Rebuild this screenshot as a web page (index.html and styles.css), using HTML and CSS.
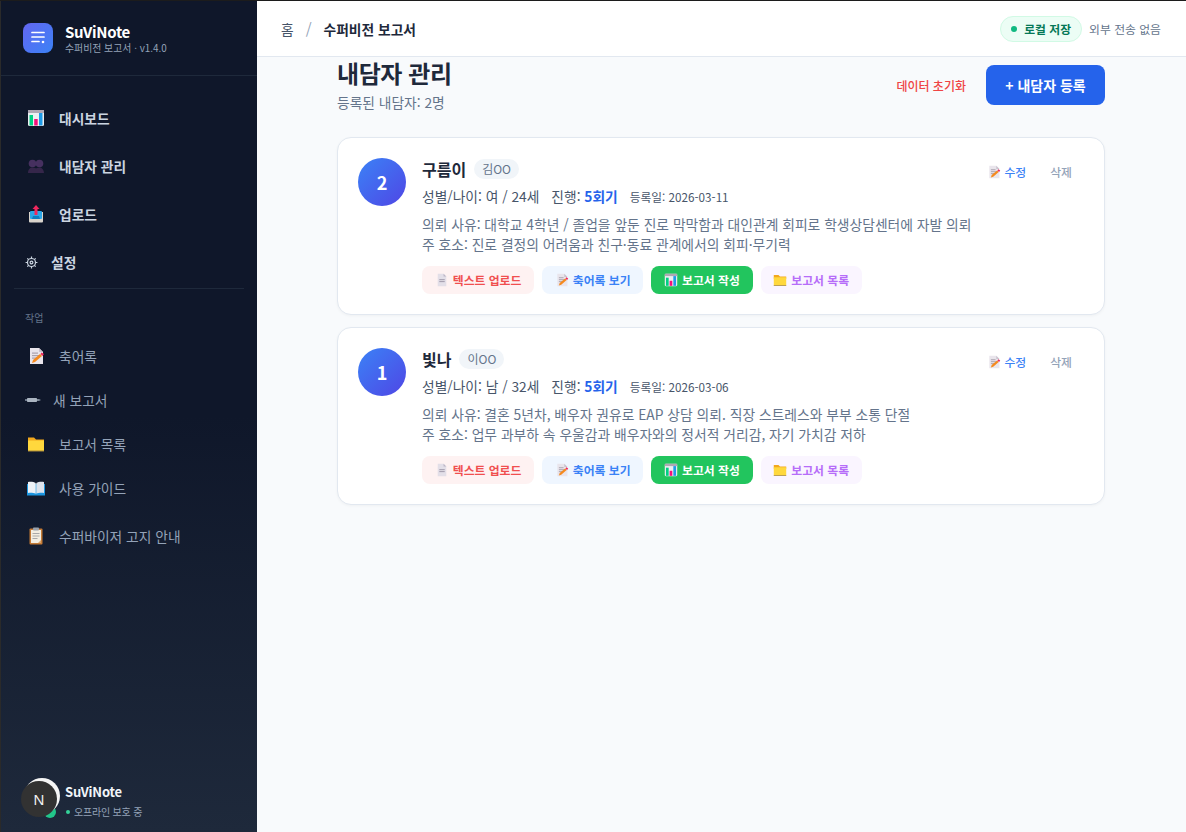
FILE: index.html
```html
<!DOCTYPE html>
<html lang="ko">
<head>
  <meta charset="UTF-8" />
  <meta name="viewport" content="width=device-width, initial-scale=1.0"/>
  <title>SuViNote - 내담자 관리</title>
  <link rel="stylesheet" href="styles.css">
</head>
<body>
  <svg class="icon-defs" width="0" height="0" aria-hidden="true">
    <symbol id="i-chart" viewBox="0 0 18 18">
      <rect x="1" y="1" width="16" height="16" rx="1.500" fill="#eceff1"/>
      <rect x="1" y="1" width="16" height="3" fill="#b0a8b4"/>
      <rect x="2.500" y="6" width="3.500" height="10.500" fill="#00d084"/>
      <rect x="7.200" y="10" width="3.500" height="6.500" fill="#f5107a"/>
      <rect x="12" y="4" width="3.500" height="12.500" fill="#1e9be8"/>
    </symbol>
    <symbol id="i-people" viewBox="0 0 18 18">
      <circle cx="5.500" cy="6.500" r="3.800" fill="#46305f"/>
      <circle cx="12.500" cy="6.500" r="3.800" fill="#46305f"/>
      <path d="M1 16c0-3.500 2-5.500 4.500-5.500s3.500 1 3.500 1 1.500-1 3.500-1 4.500 2 4.500 5.500z" fill="#35264a"/>
    </symbol>
    <symbol id="i-upload" viewBox="0 0 18 18">
      <path d="M2 7h14v9.500a1 1 0 0 1-1 1H3a1 1 0 0 1-1-1z" fill="#d9d4cc"/>
      <rect x="3" y="6" width="12" height="8" rx="1" fill="#2ba6e8"/>
      <path d="M6 11h6l1 3H5z" fill="#0d7cc0"/>
      <path d="M9 0l3.500 4H10.500v6h-3V4H5.500z" fill="#f0285e"/>
    </symbol>
    <symbol id="i-memo" viewBox="0 0 18 18">
      <path d="M3 1h9l4 4v12H3z" fill="#e9e5ec"/>
      <path d="M12 1l4 4h-4z" fill="#c9c2cd"/>
      <rect x="5" y="5.500" width="6" height="1.200" fill="#a9a2ad"/>
      <rect x="5" y="8" width="8" height="1.200" fill="#a9a2ad"/>
      <rect x="5" y="10.500" width="5" height="1.200" fill="#a9a2ad"/>
      <path d="M5 16l1-3 7-6 2 2-7 6z" fill="#f58a1f"/>
      <path d="M14.500 5.500l2.500 1.500-1.500 2-2-2z" fill="#f0285e"/>
    </symbol>
    <symbol id="i-pen" viewBox="0 0 16 6">
      <rect x="0" y="2" width="2" height="2" rx="1" fill="#8d99a8"/>
      <rect x="2" y="1" width="10" height="4" rx="0.800" fill="#aab4c0"/>
      <path d="M12 2h2l2 1-2 1h-2z" fill="#7d8997"/>
    </symbol>
    <symbol id="i-folder" viewBox="0 0 18 18">
      <path d="M1 2.500h6l2 2h8v3H1z" fill="#f2a81d"/>
      <path d="M1 5.500h16V16H1z" fill="#ffd83d"/>
      <rect x="1" y="15.500" width="16" height="1" fill="#a98a3c"/>
    </symbol>
    <symbol id="i-book" viewBox="0 0 18 18">
      <path d="M0 5h18v11.500H0z" fill="#1c96e0"/>
      <path d="M1 3c3-.500 6 0 7.700 1v10.800C7 14 4 13.600 1 14z" fill="#eef2f7"/>
      <path d="M17 3c-3-.500-6 0-7.700 1v10.800c1.700-.800 4.700-1.200 7.700-.800z" fill="#dde3ec"/>
    </symbol>
    <symbol id="i-clip" viewBox="0 0 18 18">
      <rect x="2.500" y="1.500" width="13" height="16" rx="1" fill="#c47a35"/>
      <rect x="4" y="3" width="10" height="13" fill="#f3eee2"/>
      <rect x="6" y="0.500" width="6" height="3" rx="0.800" fill="#9aa2ac"/>
      <rect x="5.500" y="6" width="7" height="1" fill="#a9a9a9"/>
      <rect x="5.500" y="8.500" width="7" height="1" fill="#a9a9a9"/>
      <rect x="5.500" y="11" width="5" height="1" fill="#a9a9a9"/>
      <path d="M14 13v3h-3z" fill="#d9a56b"/>
    </symbol>
    <symbol id="i-page" viewBox="0 0 18 18">
      <path d="M3.500 1h7.500l3.500 3.500V17h-11z" fill="#e3dfe8"/>
      <path d="M11 1l3.500 3.500H11z" fill="#bdb6c6"/>
      <rect x="5.500" y="8" width="7" height="1.200" fill="#9d96a8"/>
      <rect x="5.500" y="10.500" width="7" height="1.200" fill="#9d96a8"/>
    </symbol>
  </svg>

  <div class="app">
    <aside class="sidebar">
      <div class="brand">
        <div class="brand-logo">
          <svg width="18" height="18" viewBox="0 0 18 18" fill="none" stroke="#fff" stroke-width="1.700" stroke-linecap="round">
            <path d="M3 3.500h12M3 8h12M3 12.500h7"/>
            <circle cx="14" cy="13" r="1.300" fill="#fff" stroke="none"/>
          </svg>
        </div>
        <div class="brand-text">
          <div class="brand-name">SuViNote</div>
          <div class="brand-sub">수퍼비전 보고서 · v1.4.0</div>
        </div>
      </div>

      <nav class="nav">
        <a class="nav-item primary" href="#"><svg class="emoji"><use href="#i-chart"/></svg>대시보드</a>
        <a class="nav-item primary" href="#"><svg class="emoji"><use href="#i-people"/></svg>내담자 관리</a>
        <a class="nav-item primary" href="#"><svg class="emoji"><use href="#i-upload"/></svg>업로드</a>
        <a class="nav-item primary small-icon" href="#">
          <svg class="gear" viewBox="0 0 14 14" fill="none" stroke="#cbd5e1" stroke-width="1.300">
            <circle cx="7" cy="7" r="4.300"/>
            <circle cx="7" cy="7" r="1.500"/>
            <path d="M7 .6v2M7 11.400v2M.6 7h2M11.400 7h2M2.500 2.500L3.900 3.900M10.100 10.100l1.400 1.400M2.500 11.500L3.900 10.100M10.100 3.900l1.400-1.400"/>
          </svg>설정</a>
        <div class="nav-line"></div>
        <div class="nav-label">작업</div>
        <a class="nav-item" href="#"><svg class="emoji"><use href="#i-memo"/></svg>축어록</a>
        <a class="nav-item small-icon" href="#"><svg class="pen"><use href="#i-pen"/></svg>새 보고서</a>
        <a class="nav-item" href="#"><svg class="emoji"><use href="#i-folder"/></svg>보고서 목록</a>
        <a class="nav-item" href="#"><svg class="emoji"><use href="#i-book"/></svg>사용 가이드</a>
        <a class="nav-item notice" href="#"><svg class="emoji"><use href="#i-clip"/></svg>수퍼바이저 고지 안내</a>
      </nav>

      <div class="side-foot">
        <div class="foot-name">SuViNote</div>
        <div class="foot-status"><span class="foot-dot"></span>오프라인 보호 중</div>
      </div>
      <div class="next-dot"></div>
      <div class="next-badge">N</div>
    </aside>

    <div class="main">
      <header class="topbar">
        <div class="crumbs">
          <span class="crumb-home">홈</span>
          <span class="crumb-sep">/</span>
          <span class="crumb-now">수퍼비전 보고서</span>
        </div>
        <div class="top-right">
          <span class="local-badge"><span class="local-dot"></span>로컬 저장</span>
          <span class="top-note">외부 전송 없음</span>
        </div>
      </header>

      <main class="content">
        <div class="page-head">
          <div>
            <h1>내담자 관리</h1>
            <p class="page-sub">등록된 내담자: 2명</p>
          </div>
          <div class="page-actions">
            <button class="btn-reset" type="button">데이터 초기화</button>
            <button class="btn-add" type="button">+ 내담자 등록</button>
          </div>
        </div>

        <div class="card">
          <div class="avatar">2</div>
          <div class="card-body">
            <div class="card-name"><strong>구름이</strong><span class="chip">김OO</span></div>
            <div class="card-meta">
              <span>성별/나이: 여 / 24세</span>
              <span>진행: <b>5회기</b></span>
              <span class="reg-date">등록일: 2026-03-11</span>
            </div>
            <div class="card-desc">
              <div>의뢰 사유: 대학교 4학년 / 졸업을 앞둔 진로 막막함과 대인관계 회피로 학생상담센터에 자발 의뢰</div>
              <div>주 호소: 진로 결정의 어려움과 친구·동료 관계에서의 회피·무기력</div>
            </div>
            <div class="card-btns">
              <a class="act act-red" href="#"><svg class="act-icon"><use href="#i-page"/></svg>텍스트 업로드</a>
              <a class="act act-blue" href="#"><svg class="act-icon"><use href="#i-memo"/></svg>축어록 보기</a>
              <a class="act act-green" href="#"><svg class="act-icon"><use href="#i-chart"/></svg>보고서 작성</a>
              <a class="act act-purple" href="#"><svg class="act-icon"><use href="#i-folder"/></svg>보고서 목록</a>
            </div>
          </div>
          <div class="card-tools">
            <a class="tool-edit" href="#"><svg class="act-icon"><use href="#i-memo"/></svg>수정</a>
            <a class="tool-del" href="#">삭제</a>
          </div>
        </div>

        <div class="card">
          <div class="avatar">1</div>
          <div class="card-body">
            <div class="card-name"><strong>빛나</strong><span class="chip">이OO</span></div>
            <div class="card-meta">
              <span>성별/나이: 남 / 32세</span>
              <span>진행: <b>5회기</b></span>
              <span class="reg-date">등록일: 2026-03-06</span>
            </div>
            <div class="card-desc">
              <div>의뢰 사유: 결혼 5년차, 배우자 권유로 EAP 상담 의뢰. 직장 스트레스와 부부 소통 단절</div>
              <div>주 호소: 업무 과부하 속 우울감과 배우자와의 정서적 거리감, 자기 가치감 저하</div>
            </div>
            <div class="card-btns">
              <a class="act act-red" href="#"><svg class="act-icon"><use href="#i-page"/></svg>텍스트 업로드</a>
              <a class="act act-blue" href="#"><svg class="act-icon"><use href="#i-memo"/></svg>축어록 보기</a>
              <a class="act act-green" href="#"><svg class="act-icon"><use href="#i-chart"/></svg>보고서 작성</a>
              <a class="act act-purple" href="#"><svg class="act-icon"><use href="#i-folder"/></svg>보고서 목록</a>
            </div>
          </div>
          <div class="card-tools">
            <a class="tool-edit" href="#"><svg class="act-icon"><use href="#i-memo"/></svg>수정</a>
            <a class="tool-del" href="#">삭제</a>
          </div>
        </div>
      </main>
    </div>
  </div>
</body>
</html>
```

FILE: styles.css
```css
* {
  box-sizing: border-box;
}
html, body {
  height: 100%;
}
body {
  margin: 0;
  font-family: "Noto Sans CJK KR", "Noto Sans", sans-serif;
  background-color: #f8fafc;
  color: #0f172a;
  overflow: hidden;
}
a {
  text-decoration: none;
}
.icon-defs {
  position: absolute;
}
.app {
  display: flex;
  height: 832px;
  border-top: 1px solid #1c1c1c;
}

/* sidebar */
.sidebar {
  position: relative;
  width: 257px;
  flex-shrink: 0;
  display: flex;
  flex-direction: column;
  background: linear-gradient(180deg, #0f172a 0%, #0f172a 50%, #1e293b 100%);
  border-left: 1px solid #2a2a2a;
}
.brand {
  display: flex;
  align-items: center;
  gap: 12px;
  height: 75px;
  padding: 0 22px;
  border-bottom: 1px solid #1e293b;
}
.brand-logo {
  width: 30px;
  height: 30px;
  border-radius: 8px;
  background: linear-gradient(135deg, #6366f1, #3b82f6);
  display: flex;
  align-items: center;
  justify-content: center;
}
.brand-text {
  padding-top: 2px;
}
.brand-name {
  font-size: 15px;
  font-weight: 700;
  line-height: 18px;
  letter-spacing: -0.3px;
  color: #fff;
}
.brand-sub {
  font-size: 9.900px;
  line-height: 14px;
  color: #94a3b8;
}
.nav {
  display: flex;
  flex-direction: column;
  padding: 18px 13px 0;
}
.nav-item {
  display: flex;
  align-items: center;
  gap: 14px;
  height: 44px;
  padding-left: 13px;
  font-size: 13.760px;
  color: #94a3b8;
}
.nav-item.primary {
  height: 48px;
  font-weight: 700;
  color: #cbd5e1;
}
.nav-item.small-icon {
  padding-left: 11px;
}
.nav-item.notice {
  height: 52px;
}
.emoji {
  width: 18px;
  height: 18px;
  flex-shrink: 0;
}
.gear {
  width: 13px;
  height: 13px;
  margin-right: -1px;
  flex-shrink: 0;
}
.pen {
  width: 16px;
  height: 6px;
  margin-right: -2px;
  flex-shrink: 0;
}
.nav-line {
  height: 1px;
  margin-top: 2px;
  background-color: #1e293b;
}
.nav-label {
  height: 45px;
  padding: 22px 0 0 11px;
  font-size: 10px;
  line-height: 14px;
  color: #64748b;
}
.side-foot {
  margin-top: auto;
  padding: 0 0 13px 64px;
}
.foot-name {
  font-size: 13px;
  font-weight: 700;
  line-height: 18px;
  letter-spacing: -0.2px;
  color: #f1f5f9;
}
.foot-status {
  display: flex;
  align-items: center;
  gap: 4px;
  margin-top: 4px;
  font-size: 10px;
  line-height: 14px;
  letter-spacing: -0.2px;
  color: #94a3b8;
}
.foot-dot {
  width: 4px;
  height: 4px;
  margin-left: 1px;
  border-radius: 50%;
  background-color: #34d399;
}
.next-dot {
  position: absolute;
  left: 43px;
  top: 805px;
  width: 12px;
  height: 12px;
  border-radius: 50%;
  background-color: #22c58a;
}
.next-badge {
  position: absolute;
  left: 20px;
  top: 780px;
  width: 36px;
  height: 36px;
  border-radius: 50%;
  display: flex;
  align-items: center;
  justify-content: center;
  background-color: #323232;
  box-shadow: 3px -3px 0 0 #f5f5f5;
  color: #f0f0f0;
  font-family: "Liberation Sans", sans-serif;
  font-size: 15px;
}

/* top bar */
.main {
  flex: 1;
  display: flex;
  flex-direction: column;
  min-width: 0;
}
.topbar {
  display: flex;
  align-items: center;
  justify-content: space-between;
  height: 56px;
  flex-shrink: 0;
  padding: 0 25px 0 24px;
  background-color: #fff;
  border-bottom: 1px solid #e2e8f0;
}
.crumbs {
  display: flex;
  align-items: center;
  font-size: 13.760px;
}
.crumb-home {
  color: #475569;
}
.crumb-sep {
  margin: 0 12px;
  color: #94a3b8;
  font-size: 15px;
}
.crumb-now {
  font-weight: 600;
  color: #1e293b;
}
.top-right {
  display: flex;
  align-items: center;
  gap: 7px;
}
.local-badge {
  display: flex;
  align-items: center;
  gap: 7px;
  height: 26px;
  padding: 0 10px;
  border: 1px solid #d1fae5;
  border-radius: 13px;
  background-color: #ecfdf5;
  font-size: 11.840px;
  font-weight: 700;
  color: #047857;
}
.local-dot {
  width: 6px;
  height: 6px;
  border-radius: 50%;
  background-color: #10b981;
}
.top-note {
  font-size: 11.840px;
  color: #64748b;
}

/* content */
.content {
  width: 768px;
  margin-left: 80px;
  padding-top: 1px;
}
.page-head {
  display: flex;
  align-items: center;
  justify-content: space-between;
  margin-bottom: 25px;
}
.page-head h1 {
  margin: 0;
  font-size: 24px;
  line-height: 30px;
  font-weight: 700;
  letter-spacing: -0.4px;
  color: #1e293b;
}
.page-sub {
  margin: 4px 0 0;
  font-size: 13.760px;
  line-height: 20px;
  color: #64748b;
}
.page-actions {
  display: flex;
  align-items: center;
  gap: 20px;
}
.btn-reset {
  padding: 0;
  border: none;
  background: none;
  font-family: inherit;
  font-size: 12px;
  font-weight: 500;
  color: #ef4444;
}
.btn-add {
  width: 119px;
  height: 40px;
  border: none;
  border-radius: 8px;
  background-color: #2563eb;
  font-family: inherit;
  font-size: 14px;
  font-weight: 700;
  color: #fff;
}

/* cards */
.card {
  display: flex;
  gap: 16px;
  height: 178px;
  margin-bottom: 12px;
  padding: 20px;
  background-color: #fff;
  border: 1px solid #e2e8f0;
  border-radius: 14px;
  box-shadow: 0 1px 3px rgba(0,0,0,0.04);
}
.avatar {
  width: 48px;
  height: 48px;
  flex-shrink: 0;
  border-radius: 50%;
  display: flex;
  align-items: center;
  justify-content: center;
  background: linear-gradient(135deg, #3b82f6, #4f46e5);
  color: #fff;
  font-size: 18px;
  font-weight: 700;
}
.card-body {
  flex: 1;
  min-width: 0;
}
.card-name {
  display: flex;
  align-items: center;
  gap: 8px;
  height: 22px;
}
.card-name strong {
  font-size: 16px;
  font-weight: 700;
  color: #1e293b;
}
.chip {
  height: 20px;
  padding: 0 8px;
  border-radius: 10px;
  background-color: #f1f5f9;
  font-size: 12px;
  line-height: 20px;
  color: #64748b;
}
.card-meta {
  display: flex;
  align-items: baseline;
  gap: 12px;
  margin-top: 6px;
  font-size: 13.760px;
  line-height: 20px;
  color: #475569;
}
.card-meta b {
  color: #2563eb;
  font-weight: 700;
}
.reg-date {
  font-size: 11.700px;
}
.card-desc {
  margin-top: 7px;
  font-size: 13.800px;
  line-height: 20px;
  white-space: nowrap;
  color: #64748b;
}
.card-btns {
  display: flex;
  gap: 8px;
  margin-top: 12px;
}
.act {
  display: flex;
  align-items: center;
  gap: 4px;
  height: 28px;
  padding: 0 12.750px 1px;
  border-radius: 8px;
  font-size: 11.840px;
  font-weight: 700;
}
.act-icon {
  width: 14px;
  height: 14px;
  flex-shrink: 0;
}
.act-red {
  background-color: #fef2f2;
  color: #f04f4f;
}
.act-blue {
  background-color: #eff6ff;
  color: #3b82f6;
}
.act-green {
  background-color: #22c55e;
  color: #fff;
}
.act-purple {
  background-color: #faf5ff;
  color: #b66df9;
}
.card-tools {
  display: flex;
  align-items: flex-start;
  gap: 24px;
  padding: 5px 12px 0 0;
  font-size: 11.840px;
  font-weight: 500;
}
.tool-edit {
  display: flex;
  align-items: center;
  gap: 3px;
  color: #3b82f6;
}
.tool-del {
  color: #94a3b8;
}
```
